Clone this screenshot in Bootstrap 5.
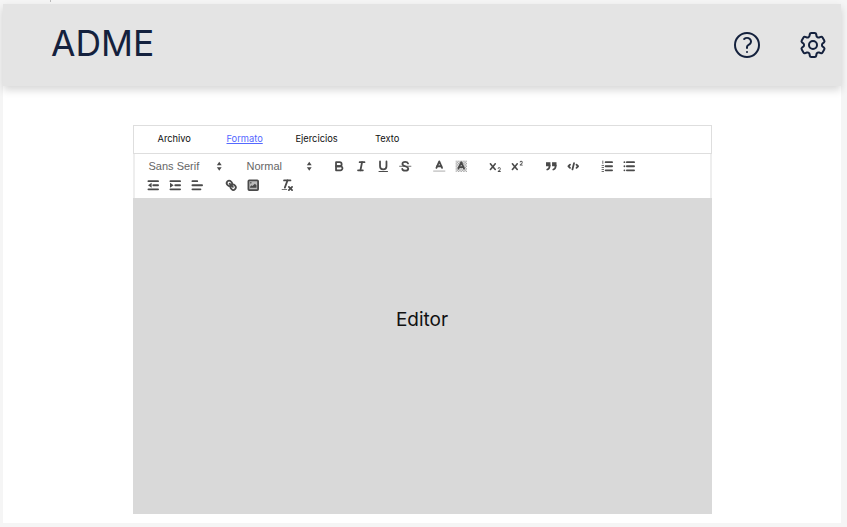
<!DOCTYPE html>
<html lang="es">
<head>
  <meta charset="UTF-8" />
  <meta name="viewport" content="width=device-width, initial-scale=1.0"/>
  <title>ADME - Editor</title>
  <link href="https://cdn.jsdelivr.net/npm/bootstrap@5.3.0/dist/css/bootstrap.min.css" rel="stylesheet" />
  <style>
    html, body { height: 527px; overflow: hidden; }
    body {
      background: #f5f5f5;
      font-family: Inter, "Liberation Sans", sans-serif;
      padding: 4px 6px 4px 3px;
    }
    .marca-top { position: absolute; left: 50px; top: 0; width: 1px; height: 2px; background: #bbb; }
    .hoja { height: 519px; background: #fff; }
    .cabecera {
      height: 82px;
      padding: 0 12px 0 48px;
      background: #e4e4e4;
      box-shadow: 0 4px 8px rgba(0,0,0,.16);
    }
    .logo { font-size: 35.4px; line-height: 1; color: #14213d; margin: 0; padding-bottom: 3px; font-weight: 400; }
    .iconos-top { gap: 34px; }
    .icono-top { width: 32px; height: 32px; fill: none; stroke: #14213d; stroke-width: 1.5; stroke-linecap: round; stroke-linejoin: round; }
    .zona { width: 579px; margin: 39px auto 0; }
    .pestanas { height: 29px; border: 1px solid #dedede; padding: 0 0 2px 24px; font-size: 9.3px; }
    .pestana { color: #111; text-decoration: none; width: 69px; flex: none; }
    .pestana.activa { color: #5468ff; }
    .pestana.activa span { text-decoration: underline; }
    .pestana.ancha { width: 79.5px; }
    .barra {
      border-left: 2px solid #eee;
      border-right: 2px solid #eee;
      height: 44px;
      padding: 3px 6px 0 8px;
      font-family: "Liberation Sans", sans-serif;
    }
    .grupo { margin-right: 12px; height: 19px; }
    .selector { font-size: 11px; color: #666; }
    .sel-fuente { width: 84px; padding-left: 6px; }
    .sel-tamano { width: 78px; padding-left: 8px; }
    .selector svg { width: 14.5px; height: 14.5px; }
    .boton { width: 22px; height: 19px; }
    .boton svg { width: 14.5px; height: 14.5px; }
    .barra svg { fill: none; stroke: #4a4a4a; stroke-width: 2.2; stroke-linecap: round; stroke-linejoin: round; }
    .barra svg .fino { stroke-width: 1; }
    .barra svg .relleno { fill: #4a4a4a; stroke: none; }
    .lienzo { height: 316px; background: #d9d9d9; font-size: 19px; color: #111; padding-bottom: 72px; }
  </style>
</head>
<body>
  <span class="marca-top"></span>
  <div class="hoja">
    <header class="cabecera d-flex align-items-center justify-content-between">
      <h1 class="logo">ADME</h1>
      <div class="iconos-top d-flex align-items-center">
        <svg class="icono-top" viewBox="0 0 24 24"><path d="M9.879 7.519c1.171-1.025 3.071-1.025 4.242 0 1.172 1.025 1.172 2.687 0 3.712-.203.179-.43.326-.67.442-.745.361-1.45.999-1.45 1.827v.75M21 12a9 9 0 11-18 0 9 9 0 0118 0zm-9 5.25h.008v.008H12v-.008z"/></svg>
        <svg class="icono-top" viewBox="0 0 24 24"><path d="M9.594 3.94c.09-.542.56-.94 1.11-.94h2.593c.55 0 1.02.398 1.11.94l.213 1.281c.063.374.313.686.645.87.074.04.147.083.22.127.325.196.72.257 1.075.124l1.217-.456a1.125 1.125 0 011.37.49l1.296 2.247a1.125 1.125 0 01-.26 1.431l-1.003.827c-.293.24-.438.613-.431.992a6.759 6.759 0 010 .255c-.007.378.138.75.43.99l1.005.828c.424.35.534.954.26 1.43l-1.298 2.247a1.125 1.125 0 01-1.369.491l-1.217-.456c-.355-.133-.75-.072-1.076.124a6.57 6.57 0 01-.22.128c-.331.183-.581.495-.644.869l-.213 1.28c-.09.543-.56.941-1.11.941h-2.594c-.55 0-1.02-.398-1.11-.94l-.213-1.281c-.062-.374-.312-.686-.644-.87a6.52 6.52 0 01-.22-.127c-.325-.196-.72-.257-1.076-.124l-1.217.456a1.125 1.125 0 01-1.369-.49l-1.297-2.247a1.125 1.125 0 01.26-1.431l1.004-.827c.292-.24.437-.613.43-.992a6.932 6.932 0 010-.255c.007-.378-.138-.75-.43-.99l-1.004-.828a1.125 1.125 0 01-.26-1.43l1.297-2.247a1.125 1.125 0 011.37-.491l1.216.456c.356.133.751.072 1.076-.124.072-.044.146-.087.22-.128.332-.183.582-.495.644-.869l.214-1.281z"/><path d="M15 12a3 3 0 11-6 0 3 3 0 016 0z"/></svg>
      </div>
    </header>

    <main class="zona">
      <nav class="pestanas d-flex align-items-center">
        <a class="pestana" href="#">Archivo</a>
        <a class="pestana activa" href="#"><span>Formato</span></a>
        <a class="pestana ancha" href="#">Ejercicios</a>
        <a class="pestana" href="#">Texto</a>
      </nav>

      <div class="barra d-flex flex-wrap align-items-start align-content-start">
        <div class="grupo selector sel-fuente d-flex align-items-center justify-content-between">
          <span>Sans Serif</span>
          <svg viewBox="0 0 18 18"><polygon class="relleno" points="6 7.7 9 3.5 12 7.7"/><polygon class="relleno" points="6 10.3 9 14.5 12 10.3"/></svg>
        </div>
        <div class="grupo selector sel-tamano d-flex align-items-center justify-content-between">
          <span>Normal</span>
          <svg viewBox="0 0 18 18"><polygon class="relleno" points="6 7.7 9 3.5 12 7.7"/><polygon class="relleno" points="6 10.3 9 14.5 12 10.3"/></svg>
        </div>
        <div class="grupo d-flex">
          <span class="boton d-flex align-items-center justify-content-center"><svg viewBox="0 0 18 18"><path d="M5,4H9.5A2.5,2.5,0,0,1,12,6.5v0A2.5,2.5,0,0,1,9.5,9H5V4Z"/><path d="M5,9h5.5A2.5,2.5,0,0,1,13,11.5v0A2.5,2.5,0,0,1,10.5,14H5V9Z"/></svg></span>
          <span class="boton d-flex align-items-center justify-content-center"><svg viewBox="0 0 18 18"><line x1="7" x2="13" y1="4" y2="4"/><line x1="5" x2="11" y1="14" y2="14"/><line x1="8" x2="10" y1="14" y2="4"/></svg></span>
          <span class="boton d-flex align-items-center justify-content-center"><svg viewBox="0 0 18 18"><path d="M5,3V9a4,4,0,0,0,4,4h0a4,4,0,0,0,4-4V3"/><rect class="relleno" x="3" y="15" width="12" height="1" rx=".5"/></svg></span>
          <span class="boton d-flex align-items-center justify-content-center"><svg viewBox="0 0 18 18"><line class="fino" x1="2" x2="16" y1="9" y2="9"/><path d="M12.5,5.5C12,4 10.5,3.5 9,3.5C6.5,3.5 5.5,5 5.5,6.2C5.5,7.5 6.5,8.2 9,9C11.5,9.8 12.7,10.5 12.7,12C12.7,13.5 11,14.5 9,14.5C7,14.5 5.5,13.5 5.3,12.2"/></svg></span>
        </div>
        <div class="grupo d-flex">
          <span class="boton d-flex align-items-center justify-content-center"><svg viewBox="0 0 18 18"><line class="fino" x1="2" x2="16" y1="15" y2="15" stroke="#999"/><polyline points="5.5 11 9 3 12.5 11"/><line x1="11.63" x2="6.38" y1="9" y2="9"/></svg></span>
          <span class="boton d-flex align-items-center justify-content-center"><svg viewBox="0 0 18 18"><defs><pattern id="trama" width="2" height="2" patternUnits="userSpaceOnUse"><rect class="relleno" width="1" height="1"/><rect class="relleno" x="1" y="1" width="1" height="1"/></pattern></defs><rect x="2" y="2" width="14" height="14" fill="url(#trama)" stroke="none" opacity=".6"/><polyline points="5.5 12 9 4 12.5 12"/><line x1="11.63" x2="6.38" y1="10" y2="10"/></svg></span>
        </div>
        <div class="grupo d-flex">
          <span class="boton d-flex align-items-center justify-content-center"><svg viewBox="0 0 18 18"><path class="relleno" d="M15.5,15H13.861a3.858,3.858,0,0,0,1.914-2.975,1.8,1.8,0,0,0-1.6-1.751A1.921,1.921,0,0,0,12.021,11.7a.5.5,0,1,0,.957.291.914.914,0,0,1,1.053-.725.81.81,0,0,1,.744.762c0,1.076-1.17,1.87-1.94,2.431A1.456,1.456,0,0,0,12,15.5a.5.5,0,0,0,.5.5h3A.5.5,0,0,0,15.5,15Z"/><path class="relleno" d="M9.651,5.241a1,1,0,0,0-1.41.108L6,7.964,3.759,5.349a1,1,0,1,0-1.519,1.3L4.683,9.5,2.241,12.35a1,1,0,1,0,1.519,1.3L6,11.036l2.241,2.614a1,1,0,0,0,1.519-1.3L7.317,9.5,9.759,6.651A1,1,0,0,0,9.651,5.241Z"/></svg></span>
          <span class="boton d-flex align-items-center justify-content-center"><svg viewBox="0 0 18 18"><path class="relleno" d="M15.5,7H13.861a4.015,4.015,0,0,0,1.914-2.975,1.8,1.8,0,0,0-1.6-1.751A1.922,1.922,0,0,0,12.021,3.7a.5.5,0,1,0,.957.291.917.917,0,0,1,1.053-.725.81.81,0,0,1,.744.762c0,1.077-1.164,1.925-1.934,2.486A1.423,1.423,0,0,0,12,7.5a.5.5,0,0,0,.5.5h3A.5.5,0,0,0,15.5,7Z"/><path class="relleno" d="M9.651,5.241a1,1,0,0,0-1.41.108L6,7.964,3.759,5.349a1,1,0,1,0-1.519,1.3L4.683,9.5,2.241,12.35a1,1,0,1,0,1.519,1.3L6,11.036l2.241,2.614a1,1,0,0,0,1.519-1.3L7.317,9.5,9.759,6.651A1,1,0,0,0,9.651,5.241Z"/></svg></span>
        </div>
        <div class="grupo d-flex">
          <span class="boton d-flex align-items-center justify-content-center"><svg viewBox="0 0 18 18"><rect class="relleno" x="2.5" y="4" width="5.5" height="5"/><rect class="relleno" x="10" y="4" width="5.5" height="5"/><path d="M7,8c0,4-3,5-3,5"/><path d="M14.5,8c0,4-3,5-3,5"/></svg></span>
          <span class="boton d-flex align-items-center justify-content-center"><svg viewBox="0 0 18 18"><polyline points="5 7 3 9 5 11"/><polyline points="13 7 15 9 13 11"/><line x1="10" x2="8" y1="5" y2="13"/></svg></span>
        </div>
        <div class="grupo d-flex">
          <span class="boton d-flex align-items-center justify-content-center"><svg viewBox="0 0 18 18"><line x1="7" x2="15" y1="4" y2="4"/><line x1="7" x2="15" y1="9" y2="9"/><line x1="7" x2="15" y1="14" y2="14"/><line class="fino" x1="3.5" x2="3.5" y1="2.5" y2="5.5"/><line class="fino" x1="2.5" x2="4.5" y1="8" y2="8"/><line class="fino" x1="2.5" x2="4.5" y1="10.5" y2="10.5"/><line class="fino" x1="2.5" x2="4.5" y1="13" y2="13"/><line class="fino" x1="2.5" x2="4.5" y1="15.5" y2="15.5"/></svg></span>
          <span class="boton d-flex align-items-center justify-content-center"><svg viewBox="0 0 18 18"><line x1="6" x2="15" y1="4" y2="4"/><line x1="6" x2="15" y1="9" y2="9"/><line x1="6" x2="15" y1="14" y2="14"/><line x1="3" x2="3" y1="4" y2="4"/><line x1="3" x2="3" y1="9" y2="9"/><line x1="3" x2="3" y1="14" y2="14"/></svg></span>
        </div>
        <div class="grupo d-flex">
          <span class="boton d-flex align-items-center justify-content-center"><svg viewBox="0 0 18 18"><line x1="3" x2="15" y1="14" y2="14"/><line x1="3" x2="15" y1="4" y2="4"/><line x1="9" x2="15" y1="9" y2="9"/><polygon class="relleno" points="7 6 7 12 2.5 9"/></svg></span>
          <span class="boton d-flex align-items-center justify-content-center"><svg viewBox="0 0 18 18"><line x1="3" x2="15" y1="14" y2="14"/><line x1="3" x2="15" y1="4" y2="4"/><line x1="9" x2="15" y1="9" y2="9"/><polygon class="relleno" points="2.5 6 2.5 12 7 9"/></svg></span>
          <span class="boton d-flex align-items-center justify-content-center"><svg viewBox="0 0 18 18"><line x1="3" x2="15" y1="9" y2="9"/><line x1="3" x2="13" y1="14" y2="14"/><line x1="3" x2="9" y1="4" y2="4"/></svg></span>
        </div>
        <div class="grupo d-flex">
          <span class="boton d-flex align-items-center justify-content-center"><svg viewBox="0 0 18 18"><line x1="7" x2="11" y1="7" y2="11"/><path d="M8.9,4.577a3.476,3.476,0,0,1,.36,4.679A3.476,3.476,0,0,1,4.577,8.9C3.185,7.5,2.035,6.4,4.217,4.217S7.5,3.185,8.9,4.577Z"/><path d="M13.423,9.1a3.476,3.476,0,0,0-4.679-.36,3.476,3.476,0,0,0,.36,4.679c1.392,1.392,2.5,2.542,4.679.36S14.815,10.5,13.423,9.1Z"/></svg></span>
          <span class="boton d-flex align-items-center justify-content-center"><svg viewBox="0 0 18 18"><rect x="3" y="3" width="12" height="12" rx="1" fill="#bbb"/><circle class="relleno" cx="6" cy="6" r="1"/><polyline class="relleno" points="5 12 5 11 7 9 8 10 11 7 13 9 13 12 5 12"/></svg></span>
        </div>
        <div class="grupo d-flex">
          <span class="boton d-flex align-items-center justify-content-center"><svg viewBox="0 0 18 18"><line x1="5" x2="13" y1="3" y2="3"/><line x1="6" x2="9.35" y1="12" y2="3"/><line x1="11" x2="15" y1="11" y2="15"/><line x1="15" x2="11" y1="11" y2="15"/><rect class="relleno" x="2" y="14" width="7" height="1" rx=".5"/></svg></span>
        </div>
      </div>

      <div class="lienzo d-flex align-items-center justify-content-center">Editor</div>
    </main>
  </div>
  <script src="https://cdn.jsdelivr.net/npm/bootstrap@5.3.0/dist/js/bootstrap.bundle.min.js"></script>
</body>
</html>
